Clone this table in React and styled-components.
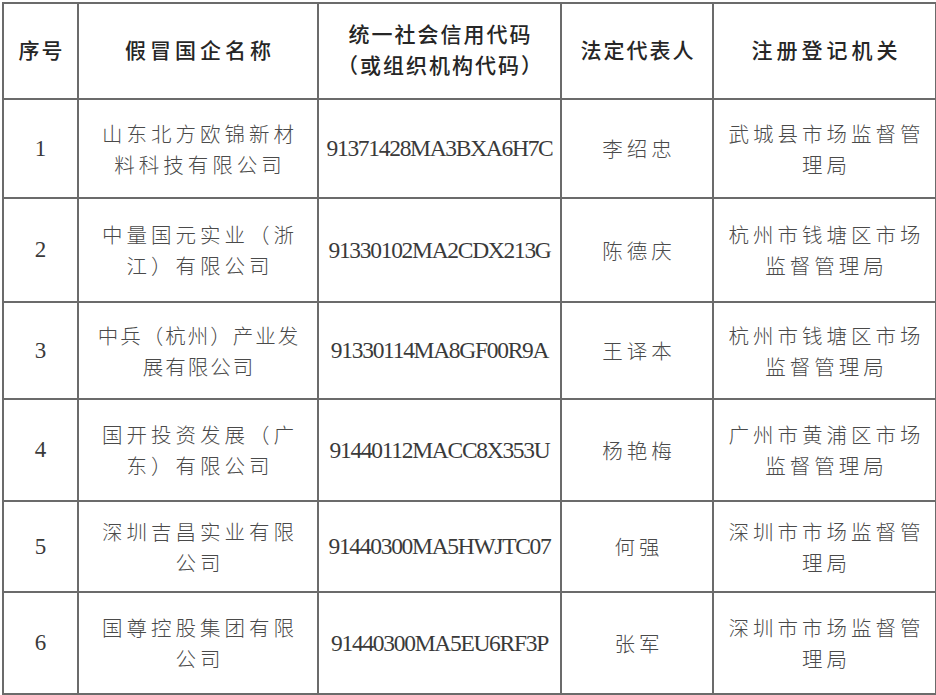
import React from "react";
import styled, { createGlobalStyle } from "styled-components";

const GlobalStyle = createGlobalStyle`
  html, body {
    margin: 0;
    padding: 0;
    background: #ffffff;
  }
`;

const Page = styled.div`
  padding: 2px 0 0 2px;
  background: #fff;
`;

const Table = styled.table`
  width: 934px;
  border-collapse: collapse;
  table-layout: fixed;
  font-family: "Noto Sans CJK SC", "Noto Sans", sans-serif;
  color: #4a4a4a;
`;

const Col = styled.col`
  width: ${(p) => p.$w}px;
`;

const Row = styled.tr`
  height: ${(p) => p.$h}px;
`;

const Cell = styled.td`
  border: 2px solid #6b6b6b;
  padding: 0;
  text-align: center;
  vertical-align: middle;
`;

const HeadCell = styled(Cell).attrs({ as: "th" })`
  font-weight: 500;
  color: #262626;
  padding-bottom: 4px;
`;

const Line = styled.div`
  font-size: ${(p) => (p.$head ? 21 : 20.5)}px;
  font-weight: ${(p) => (p.$head ? 500 : 300)};
  line-height: 31px;
  letter-spacing: ${(p) => (p.$tight ? 2 : 4)}px;
  padding-left: ${(p) => (p.$tight ? 2 : 4)}px;
  white-space: nowrap;
`;

const Num = styled.div`
  font-family: "Liberation Serif", "Times New Roman", serif;
  font-size: 23px;
  color: #3a3a3a;
`;

const Code = styled.div`
  font-family: "Liberation Serif", "Times New Roman", serif;
  font-size: 23.5px;
  letter-spacing: -1.3px;
  color: #3a3a3a;
  white-space: nowrap;
`;

const columns = [75, 240, 243, 152, 223];

const rows = [
  {
    h: 99,
    name: ["山东北方欧锦新材", "料科技有限公司"],
    code: "91371428MA3BXA6H7C",
    rep: "李绍忠",
    org: ["武城县市场监督管", "理局"],
  },
  {
    h: 104,
    name: ["中量国元实业（浙", "江）有限公司"],
    code: "91330102MA2CDX213G",
    rep: "陈德庆",
    org: ["杭州市钱塘区市场", "监督管理局"],
  },
  {
    h: 97,
    name: ["中兵（杭州）产业发", "展有限公司"],
    tight: true,
    code: "91330114MA8GF00R9A",
    rep: "王译本",
    org: ["杭州市钱塘区市场", "监督管理局"],
  },
  {
    h: 102,
    name: ["国开投资发展（广", "东）有限公司"],
    code: "91440112MACC8X353U",
    rep: "杨艳梅",
    org: ["广州市黄浦区市场", "监督管理局"],
  },
  {
    h: 91,
    name: ["深圳吉昌实业有限", "公司"],
    code: "91440300MA5HWJTC07",
    rep: "何强",
    org: ["深圳市市场监督管", "理局"],
  },
  {
    h: 102,
    name: ["国尊控股集团有限", "公司"],
    code: "91440300MA5EU6RF3P",
    rep: "张军",
    org: ["深圳市市场监督管", "理局"],
  },
];

export default function App() {
  return (
    <>
      <GlobalStyle />
      <Page>
        <Table>
          <colgroup>
            {columns.map((w, i) => (
              <Col key={i} $w={w} />
            ))}
          </colgroup>
          <thead>
            <Row $h={96}>
              <HeadCell>
                <Line $head $tight>序号</Line>
              </HeadCell>
              <HeadCell>
                <Line $head>假冒国企名称</Line>
              </HeadCell>
              <HeadCell>
                <Line $head $tight>统一社会信用代码</Line>
                <Line $head $tight>（或组织机构代码）</Line>
              </HeadCell>
              <HeadCell>
                <Line $head $tight>法定代表人</Line>
              </HeadCell>
              <HeadCell>
                <Line $head>注册登记机关</Line>
              </HeadCell>
            </Row>
          </thead>
          <tbody>
            {rows.map((r, i) => (
              <Row key={i} $h={r.h}>
                <Cell>
                  <Num>{i + 1}</Num>
                </Cell>
                <Cell>
                  {r.name.map((l, j) => (
                    <Line key={j} $tight={r.tight}>{l}</Line>
                  ))}
                </Cell>
                <Cell>
                  <Code>{r.code}</Code>
                </Cell>
                <Cell>
                  <Line>{r.rep}</Line>
                </Cell>
                <Cell>
                  {r.org.map((l, j) => (
                    <Line key={j}>{l}</Line>
                  ))}
                </Cell>
              </Row>
            ))}
          </tbody>
        </Table>
      </Page>
    </>
  );
}
